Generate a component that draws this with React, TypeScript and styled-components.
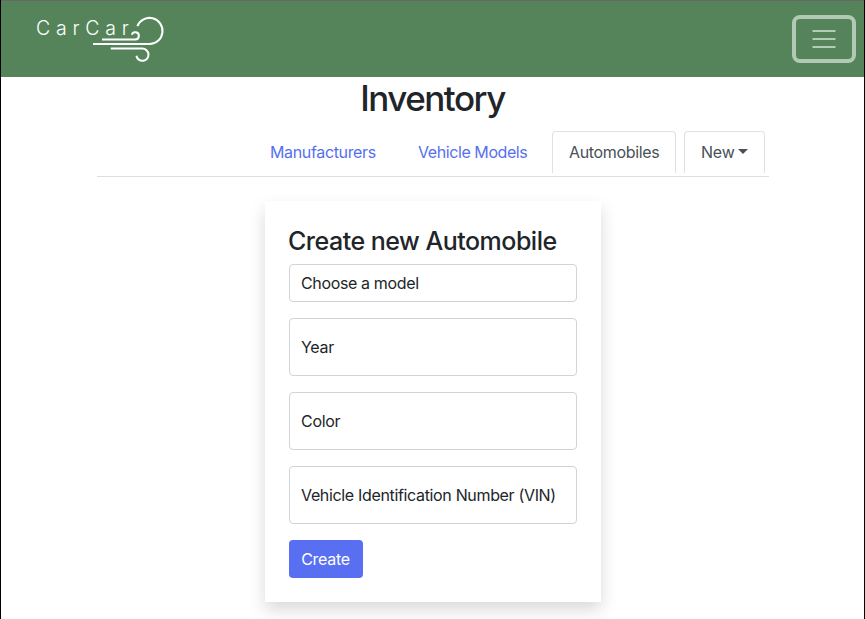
import React from "react";
import styled, { createGlobalStyle } from "styled-components";

const GlobalStyle = createGlobalStyle`
  *, *::before, *::after { box-sizing: border-box; }
  body {
    margin: 0;
    background: #fff;
    color: #212529;
    font: 400 16px/24px Inter, "Liberation Sans", sans-serif;
    overflow: hidden;
  }
`;

const Window = styled.div`
  height: 619px;
  border: solid #000;
  border-width: 0 1px;
  overflow: hidden;
`;

const Navbar = styled.header`
  display: flex;
  justify-content: space-between;
  align-items: flex-start;
  height: 77px;
  padding: 14px 8px 0 35px;
  background: #55845a;
  border-top: 1px solid #68656b;
`;

const Brand = styled.a`
  display: flex;
  color: #fff;
`;

const BrandName = styled.span`
  width: 57px;
  font-size: 19.5px;
  font-weight: 300;
  line-height: 26px;
  letter-spacing: 5.8px;
  white-space: nowrap;
`;

const Wind = styled.svg`
  width: 72px;
  height: 48px;
  flex: none;
  fill: none;
  stroke: #fff;
  stroke-width: 2;
`;

const Toggler = styled.button`
  display: flex;
  align-items: center;
  justify-content: center;
  width: 64px;
  height: 48px;
  padding: 0;
  background: transparent;
  border: 4px solid #b2cab5;
  border-radius: 8px;
`;

const Bars = styled.svg`
  width: 24px;
  height: 20px;
  stroke: #b5ccb8;
  stroke-width: 2;
`;

const Title = styled.h1`
  margin: 0;
  font-size: 35px;
  font-weight: 500;
  line-height: 43px;
  height: 44px;
  letter-spacing: -1.5px;
  text-align: center;
`;

const Tabs = styled.nav`
  display: flex;
  justify-content: flex-end;
  width: 672px;
  height: 56px;
  margin: 0 0 24px 96px;
  padding: 10px 4px 0 0;
  gap: 8px;
  border-bottom: 1px solid #dedede;
`;

const Tab = styled.a<{ $boxed?: boolean; $width: number; $spacing: number }>`
  display: flex;
  align-items: center;
  width: ${(p) => p.$width}px;
  height: 42px;
  padding: 0 0 1px 16px;
  color: ${(p) => (p.$boxed ? "#495057" : "#566ff0")};
  letter-spacing: ${(p) => p.$spacing}px;
  white-space: nowrap;
  border: 1px solid ${(p) => (p.$boxed ? "#dee2e6" : "transparent")};
  border-bottom: 0;
  border-radius: 4px 4px 0 0;
`;

const Caret = styled.span`
  margin: -1px 0 0 3px;
  border: solid transparent;
  border-width: 5px 5px 0;
  border-top-color: #495057;
`;

const Card = styled.form`
  display: flex;
  flex-direction: column;
  align-items: flex-start;
  gap: 16px;
  width: 336px;
  height: 401px;
  margin-left: 264px;
  padding: 24px;
  background: #fff;
  box-shadow: 0 8px 16px rgba(0, 0, 0, 0.15);
`;

const CardTitle = styled.h2`
  margin: 0 0 -8px -1px;
  font-size: 25px;
  font-weight: 500;
  height: 31px;
  line-height: 33px;
  letter-spacing: -0.5px;
  white-space: nowrap;
`;

const Field = styled.label<{ $tall?: boolean; $spacing: number }>`
  display: flex;
  align-items: center;
  width: 288px;
  height: ${(p) => (p.$tall ? 58 : 38)}px;
  padding: 0 11px;
  letter-spacing: ${(p) => p.$spacing}px;
  white-space: nowrap;
  border: 1px solid #ced4da;
  border-radius: 4px;
`;

const Submit = styled.button`
  width: 74px;
  height: 38px;
  padding: 0 1px 0 0;
  color: #fff;
  font: inherit;
  letter-spacing: -0.3px;
  background: #596ff2;
  border: 0;
  border-radius: 4px;
`;

export default function App() {
  return (
    <>
      <GlobalStyle />
      <Window>
        <Navbar>
          <Brand>
            <BrandName>CarCar</BrandName>
            <Wind viewBox="93 15 72 48">
              <path d="M93 43.9H149.5A13 13 0 1 0 137.4 26.2" />
              <path d="M102 39.4H135.3A3.6 3.6 0 1 0 131.8 34.8" />
              <path d="M110.7 48.6H142.2A6.1 6.1 0 1 1 136.4 55.8" />
            </Wind>
          </Brand>
          <Toggler type="button" aria-label="Toggle navigation">
            <Bars viewBox="0 0 24 20">
              <path d="M0.5 2H23.5M0.5 10H23.5M0.5 18H23.5" />
            </Bars>
          </Toggler>
        </Navbar>
        <Title>Inventory</Title>
        <Tabs>
          <Tab $width={140} $spacing={-0.35}>Manufacturers</Tab>
          <Tab $width={143} $spacing={-0.42}>Vehicle Models</Tab>
          <Tab $boxed $width={124} $spacing={-0.35}>Automobiles</Tab>
          <Tab $boxed $width={81} $spacing={-0.2}>
            New
            <Caret />
          </Tab>
        </Tabs>
        <Card>
          <CardTitle>Create new Automobile</CardTitle>
          <Field $spacing={-0.36}>Choose a model</Field>
          <Field $tall $spacing={-0.3}>Year</Field>
          <Field $tall $spacing={-0.3}>Color</Field>
          <Field $tall $spacing={-0.34}>Vehicle Identification Number (VIN)</Field>
          <Submit type="button">Create</Submit>
        </Card>
      </Window>
    </>
  );
}
